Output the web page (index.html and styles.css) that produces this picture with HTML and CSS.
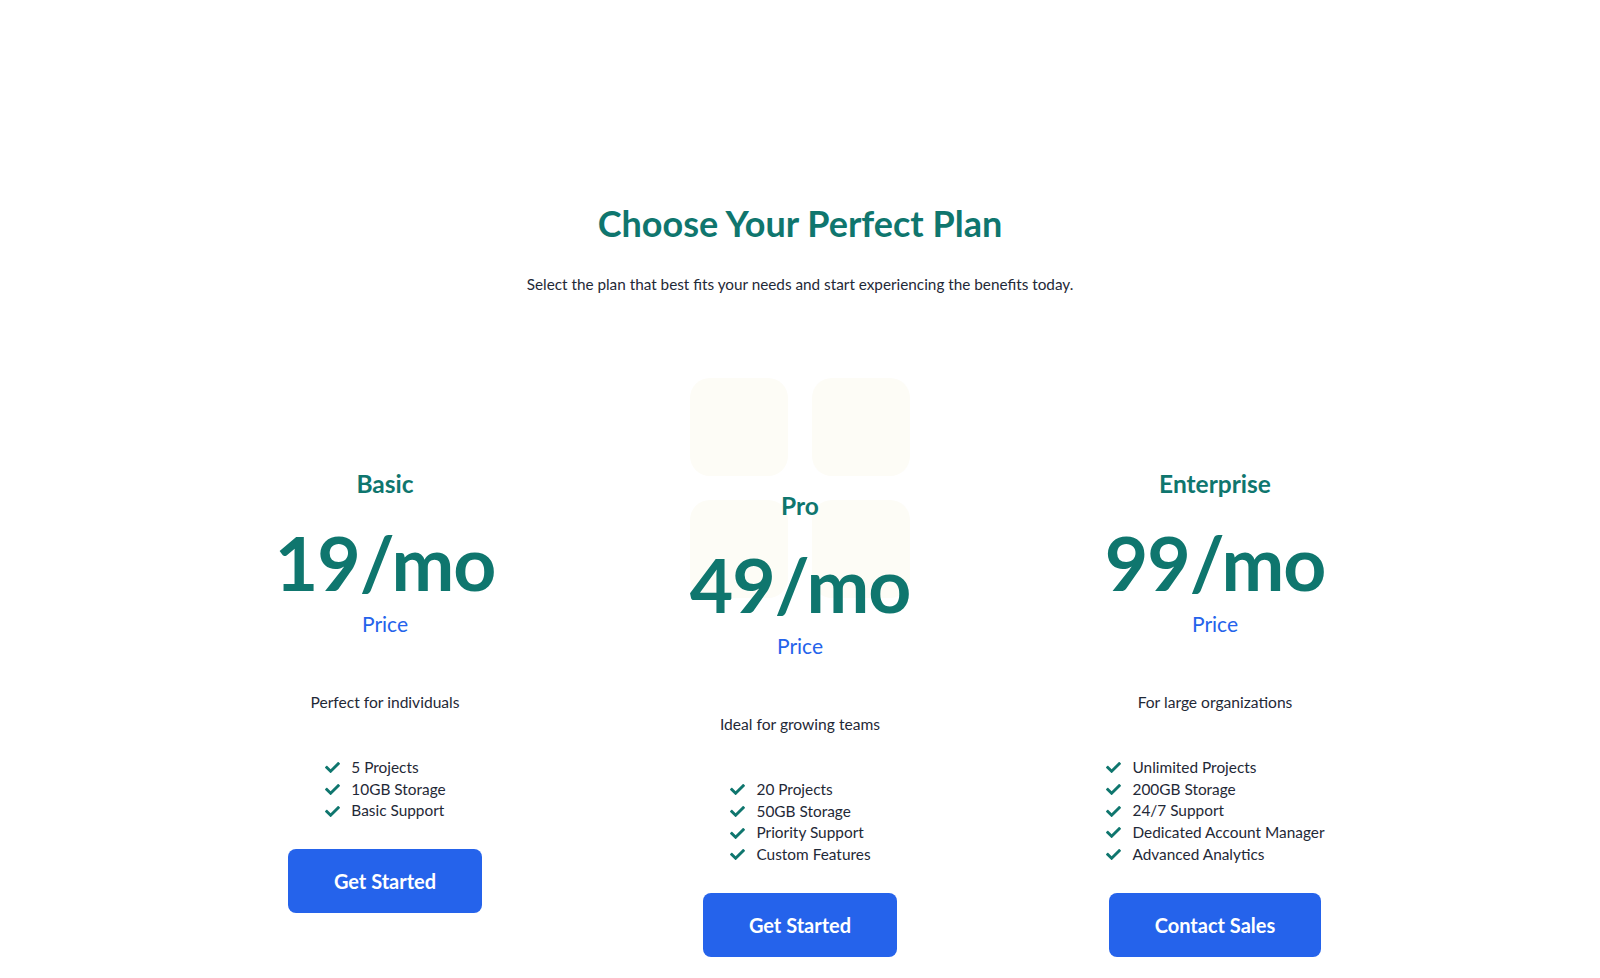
FILE: index.html
```html
<!DOCTYPE html>
<html lang="en">
<head>
<meta charset="utf-8">
<title>Pricing</title>
<link rel="stylesheet" href="styles.css">
</head>
<body>
<section class="pricing">
  <header class="intro">
    <h1 class="title">Choose Your Perfect Plan</h1>
    <p class="subtitle">Select the plan that best fits your needs and start experiencing the benefits today.</p>
  </header>
  <div class="plans">
    <div class="plan">
      <h2 class="plan-name">Basic</h2>
      <div class="plan-price">19/mo</div>
      <div class="price-label">Price</div>
      <p class="plan-desc">Perfect for individuals</p>
      <ul class="features">
        <li><svg class="check" viewBox="0 0 512 512"><path d="M173.9 439.4l-166.4-166.4c-10-10-10-26.2 0-36.2l36.2-36.2c10-10 26.2-10 36.2 0L192 312.7 432.1 72.6c10-10 26.2-10 36.2 0l36.2 36.2c10 10 10 26.2 0 36.2L210.1 439.4c-10 10-26.2 10-36.2 0z"/></svg>5 Projects</li>
        <li><svg class="check" viewBox="0 0 512 512"><path d="M173.9 439.4l-166.4-166.4c-10-10-10-26.2 0-36.2l36.2-36.2c10-10 26.2-10 36.2 0L192 312.7 432.1 72.6c10-10 26.2-10 36.2 0l36.2 36.2c10 10 10 26.2 0 36.2L210.1 439.4c-10 10-26.2 10-36.2 0z"/></svg>10GB Storage</li>
        <li><svg class="check" viewBox="0 0 512 512"><path d="M173.9 439.4l-166.4-166.4c-10-10-10-26.2 0-36.2l36.2-36.2c10-10 26.2-10 36.2 0L192 312.7 432.1 72.6c10-10 26.2-10 36.2 0l36.2 36.2c10 10 10 26.2 0 36.2L210.1 439.4c-10 10-26.2 10-36.2 0z"/></svg>Basic Support</li>
      </ul>
      <button class="cta">Get Started</button>
    </div>
    <div class="plan plan-featured">
      <div class="deco" aria-hidden="true"><span></span><span></span><span></span><span></span></div>
      <h2 class="plan-name">Pro</h2>
      <div class="plan-price">49/mo</div>
      <div class="price-label">Price</div>
      <p class="plan-desc">Ideal for growing teams</p>
      <ul class="features">
        <li><svg class="check" viewBox="0 0 512 512"><path d="M173.9 439.4l-166.4-166.4c-10-10-10-26.2 0-36.2l36.2-36.2c10-10 26.2-10 36.2 0L192 312.7 432.1 72.6c10-10 26.2-10 36.2 0l36.2 36.2c10 10 10 26.2 0 36.2L210.1 439.4c-10 10-26.2 10-36.2 0z"/></svg>20 Projects</li>
        <li><svg class="check" viewBox="0 0 512 512"><path d="M173.9 439.4l-166.4-166.4c-10-10-10-26.2 0-36.2l36.2-36.2c10-10 26.2-10 36.2 0L192 312.7 432.1 72.6c10-10 26.2-10 36.2 0l36.2 36.2c10 10 10 26.2 0 36.2L210.1 439.4c-10 10-26.2 10-36.2 0z"/></svg>50GB Storage</li>
        <li><svg class="check" viewBox="0 0 512 512"><path d="M173.9 439.4l-166.4-166.4c-10-10-10-26.2 0-36.2l36.2-36.2c10-10 26.2-10 36.2 0L192 312.7 432.1 72.6c10-10 26.2-10 36.2 0l36.2 36.2c10 10 10 26.2 0 36.2L210.1 439.4c-10 10-26.2 10-36.2 0z"/></svg>Priority Support</li>
        <li><svg class="check" viewBox="0 0 512 512"><path d="M173.9 439.4l-166.4-166.4c-10-10-10-26.2 0-36.2l36.2-36.2c10-10 26.2-10 36.2 0L192 312.7 432.1 72.6c10-10 26.2-10 36.2 0l36.2 36.2c10 10 10 26.2 0 36.2L210.1 439.4c-10 10-26.2 10-36.2 0z"/></svg>Custom Features</li>
      </ul>
      <button class="cta">Get Started</button>
    </div>
    <div class="plan">
      <h2 class="plan-name">Enterprise</h2>
      <div class="plan-price">99/mo</div>
      <div class="price-label">Price</div>
      <p class="plan-desc">For large organizations</p>
      <ul class="features">
        <li><svg class="check" viewBox="0 0 512 512"><path d="M173.9 439.4l-166.4-166.4c-10-10-10-26.2 0-36.2l36.2-36.2c10-10 26.2-10 36.2 0L192 312.7 432.1 72.6c10-10 26.2-10 36.2 0l36.2 36.2c10 10 10 26.2 0 36.2L210.1 439.4c-10 10-26.2 10-36.2 0z"/></svg>Unlimited Projects</li>
        <li><svg class="check" viewBox="0 0 512 512"><path d="M173.9 439.4l-166.4-166.4c-10-10-10-26.2 0-36.2l36.2-36.2c10-10 26.2-10 36.2 0L192 312.7 432.1 72.6c10-10 26.2-10 36.2 0l36.2 36.2c10 10 10 26.2 0 36.2L210.1 439.4c-10 10-26.2 10-36.2 0z"/></svg>200GB Storage</li>
        <li><svg class="check" viewBox="0 0 512 512"><path d="M173.9 439.4l-166.4-166.4c-10-10-10-26.2 0-36.2l36.2-36.2c10-10 26.2-10 36.2 0L192 312.7 432.1 72.6c10-10 26.2-10 36.2 0l36.2 36.2c10 10 10 26.2 0 36.2L210.1 439.4c-10 10-26.2 10-36.2 0z"/></svg>24/7 Support</li>
        <li><svg class="check" viewBox="0 0 512 512"><path d="M173.9 439.4l-166.4-166.4c-10-10-10-26.2 0-36.2l36.2-36.2c10-10 26.2-10 36.2 0L192 312.7 432.1 72.6c10-10 26.2-10 36.2 0l36.2 36.2c10 10 10 26.2 0 36.2L210.1 439.4c-10 10-26.2 10-36.2 0z"/></svg>Dedicated Account Manager</li>
        <li><svg class="check" viewBox="0 0 512 512"><path d="M173.9 439.4l-166.4-166.4c-10-10-10-26.2 0-36.2l36.2-36.2c10-10 26.2-10 36.2 0L192 312.7 432.1 72.6c10-10 26.2-10 36.2 0l36.2 36.2c10 10 10 26.2 0 36.2L210.1 439.4c-10 10-26.2 10-36.2 0z"/></svg>Advanced Analytics</li>
      </ul>
      <button class="cta">Contact Sales</button>
    </div>
  </div>
</section>
</body>
</html>
```

FILE: styles.css
```css
* { box-sizing: border-box; }
html, body { margin: 0; padding: 0; background: #ffffff; }
body {
  font-family: "Lato", "Inter", "Liberation Sans", sans-serif;
  color: #1f2937;
  width: 1600px;
  height: 978px;
  overflow: hidden;
}
.pricing {
  display: flex;
  flex-direction: column;
  align-items: center;
  padding-top: 200px;
}
.intro { text-align: center; }
.title {
  margin: 0;
  font-size: 36px;
  line-height: 46px;
  font-weight: 700;
  color: #0f766e;
}
.subtitle {
  margin: 27px 0 0;
  font-size: 15.3px;
  line-height: 22px;
  color: #1f2937;
}
.plans {
  display: grid;
  grid-template-columns: repeat(3, 383px);
  column-gap: 32px;
  align-items: start;
  margin-top: 175px;
}
.plan {
  position: relative;
  display: flex;
  flex-direction: column;
  align-items: center;
  text-align: center;
}
.plan-featured { margin-top: 22px; }
.deco {
  position: absolute;
  top: -114px;
  left: 50%;
  margin-left: -110px;
  width: 220px;
  display: grid;
  grid-template-columns: 98px 98px;
  grid-auto-rows: 98px;
  gap: 24px;
  z-index: 0;
}
.deco span {
  background: #fdfcf6;
  border-radius: 20px;
}
.plan > *:not(.deco) { position: relative; z-index: 1; }
.plan-name {
  margin: 0;
  font-size: 24.5px;
  line-height: 28px;
  font-weight: 700;
  color: #0f766e;
}
.plan-price {
  margin-top: 22px;
  font-size: 75px;
  line-height: 84px;
  font-weight: 700;
  color: #0f766e;
  letter-spacing: -1px;
}
.price-label {
  margin-top: 8px;
  font-size: 21px;
  line-height: 24px;
  color: #2563eb;
}
.plan-desc {
  margin: 56px 0 0;
  font-size: 15.6px;
  line-height: 20px;
  color: #1f2937;
}
.features {
  list-style: none;
  margin: 45px 0 0;
  padding: 0;
  text-align: left;
}
.features li {
  display: flex;
  align-items: center;
  gap: 10px;
  font-size: 15.4px;
  line-height: 21.7px;
  color: #1f2937;
}
.check {
  width: 17px;
  height: 15px;
  fill: #0f766e;
  flex: none;
}
.cta {
  margin-top: 27px;
  height: 64px;
  padding: 0 46px;
  border: none;
  border-radius: 8px;
  background: #2563eb;
  color: #ffffff;
  font-family: inherit;
  font-size: 20px;
  font-weight: 700;
  cursor: pointer;
}
```
